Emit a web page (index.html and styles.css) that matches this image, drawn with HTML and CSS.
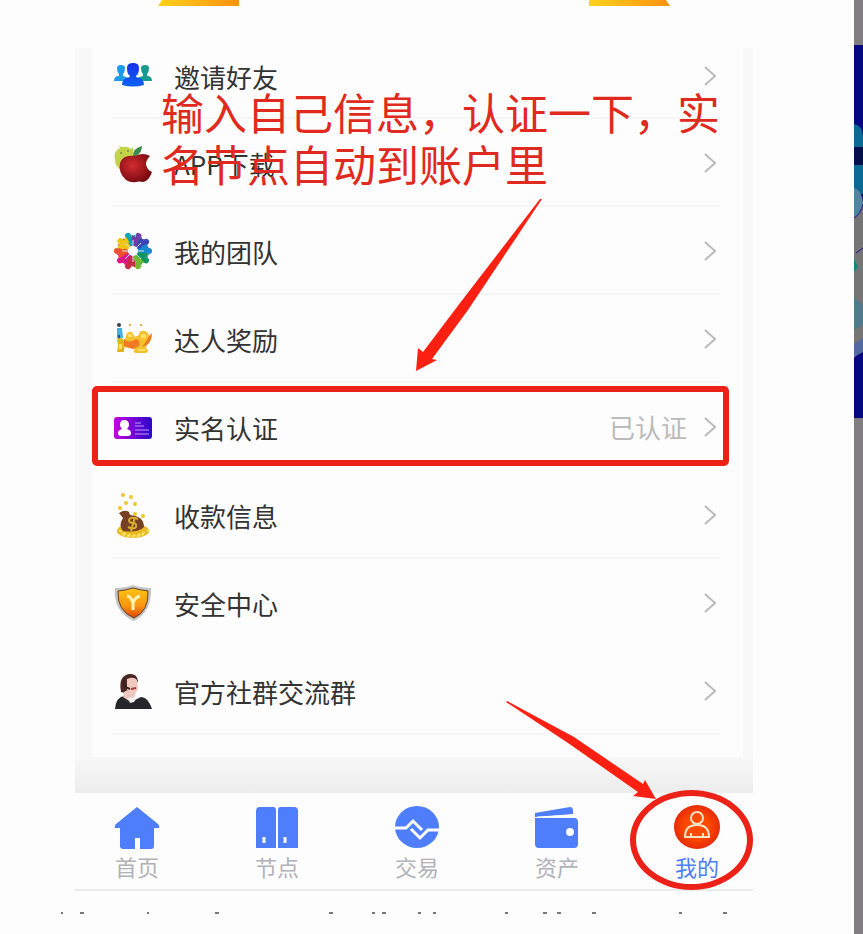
FILE: index.html
```html
<!DOCTYPE html>
<html lang="zh-CN">
<head>
    <meta charset="UTF-8">
    <meta name="viewport" content="width=device-width, initial-scale=1.0">
    <title>实名认证</title>
    <link rel="stylesheet" href="styles.css">
</head>
<body>
    <main class="sheet">
        <div class="banner">
            <span class="banner-tab left"></span>
            <span class="banner-tab right"></span>
        </div>

        <div class="phone">
            <div class="panel">
                <div class="card">
                    <a href="#" class="row first">
                        <svg class="icon" viewBox="0 0 40 40">
                            <defs>
                                <linearGradient id="mid" x1="0" y1="0" x2="0" y2="1">
                                    <stop offset="0" stop-color="#1730e8"/>
                                    <stop offset="1" stop-color="#0b63f5"/>
                                </linearGradient>
                            </defs>
                            <path fill="#1c9be8" d="M4 12q0-3 4-3t4 3q0 4-2 6v2q4 1 5 2v3H1q0-5 5-5v-2q-2-2-2-6z"/>
                            <path fill="#159a92" d="M28 12q0-3 4-3t4 3q0 4-2 6v2q5 0 5 5H25v-3q1-1 5-2v-2q-2-2-2-6z"/>
                            <path fill="url(#mid)" d="M14 12q0-5 6-5t6 5q0 6-3 8v1q8 1 8 8-11 3-22 0 0-7 8-8v-1q-3-2-3-8z"/>
                        </svg>
                        <span class="name">邀请好友</span>
                        <svg class="chevron" viewBox="0 0 14 22"><path d="M2 2l10 9-10 9"/></svg>
                    </a>
                    <a href="#" class="row">
                        <svg class="icon" viewBox="0 0 40 40">
                            <defs>
                                <radialGradient id="apple" cx="0.4" cy="0.4" r="0.65">
                                    <stop offset="0" stop-color="#d42b30"/>
                                    <stop offset="1" stop-color="#74090f"/>
                                </radialGradient>
                            </defs>
                            <path fill="#c3d24b" d="M2 17q-2-9 5-12l-1-2 3 1q6-1 9 2l2-2v4q3 5 0 11L8 27q-6-4-6-10z"/>
                            <circle cx="8" cy="10" r="1" fill="#7d9330"/>
                            <circle cx="15" cy="8" r="1" fill="#7d9330"/>
                            <path fill="#3e8b52" d="M20 13q0-8 9-10 0 7-6 10z"/>
                            <path fill="url(#apple)" d="M22 13q8-4 15 0-4 4-4 8 1 6 6 8-3 9-9 10-4-1-7 0-5 1-10-2-8-7-6-17 3-9 15-7z"/>
                        </svg>
                        <span class="name">APP下载</span>
                        <svg class="chevron" viewBox="0 0 14 22"><path d="M2 2l10 9-10 9"/></svg>
                    </a>
                    <a href="#" class="row">
                        <svg class="icon" viewBox="0 0 40 40">
                            <defs>
                                <g id="person">
                                    <circle cx="20" cy="4" r="3"/>
                                    <path d="M13 5l4 1h6l4-1-2 6-2 1-1 5h-4l-1-5-2-1z"/>
                                </g>
                            </defs>
                            <use href="#person" fill="#12a3b5" transform="rotate(-18 20 20)"/>
                            <use href="#person" fill="#6f3fa8" transform="rotate(20 20 20)"/>
                            <use href="#person" fill="#3948b5" transform="rotate(55 20 20)"/>
                            <use href="#person" fill="#1688d2" transform="rotate(90 20 20)"/>
                            <use href="#person" fill="#12955f" transform="rotate(126 20 20)"/>
                            <use href="#person" fill="#72b832" transform="rotate(162 20 20)"/>
                            <use href="#person" fill="#c62c48" transform="rotate(198 20 20)"/>
                            <use href="#person" fill="#df168b" transform="rotate(234 20 20)"/>
                            <use href="#person" fill="#ee5128" transform="rotate(270 20 20)"/>
                            <use href="#person" fill="#f1c711" transform="rotate(308 20 20)"/>
                            <path stroke="#d3e6f8" d="M20 9v22M9 20h22M12 12l16 16M28 12L12 28"/>
                            <circle cx="20" cy="20" r="5" fill="#fff"/>
                        </svg>
                        <span class="name">我的团队</span>
                        <svg class="chevron" viewBox="0 0 14 22"><path d="M2 2l10 9-10 9"/></svg>
                    </a>
                    <a href="#" class="row">
                        <svg class="icon" viewBox="0 0 40 40">
                            <circle cx="6" cy="6" r="2" fill="#35414c"/>
                            <path fill="#43afe4" d="M4 9h5l1 10H4z"/>
                            <path fill="#28567c" d="M5 16h2v5H5z"/>
                            <path fill="#e0b51d" d="M4 20q5-3 8 3l-1 10H4l1-6z"/>
                            <path fill="#f6c12e" d="M13 17q1-5 6-4l3 5 4-2q0-5 6-4 6 2 3 9l-2 8q4 3 0 5H22q-3-2 0-4l-12-2 2-8z"/>
                            <path fill="#f07b22" d="M11 20q5 5 12 0 5 1 3 7l-6 3-9-3zM34 21q1-4 5-7 0 8-5 12l-5 2z"/>
                            <path fill="#ffe067" d="M15 15h4v3h-4zM28 15h5v4h-5zM25 30h7v2h-7zM6 25h3v5H6z"/>
                            <path fill="#e7b23a" d="M16 5h2v2h-2zM27 5h2v2h-2z"/>
                        </svg>
                        <span class="name">达人奖励</span>
                        <svg class="chevron" viewBox="0 0 14 22"><path d="M2 2l10 9-10 9"/></svg>
                    </a>
                    <a href="#" class="row marked">
                        <svg class="icon" viewBox="0 0 40 40">
                            <defs>
                                <linearGradient id="idcard">
                                    <stop offset="0" stop-color="#c400e0"/>
                                    <stop offset="1" stop-color="#2a08c9"/>
                                </linearGradient>
                            </defs>
                            <rect x="1" y="10" width="38" height="22" rx="3" fill="url(#idcard)"/>
                            <path fill="#fff" d="M11 13q5 0 5 5 0 2-2 4 4 1 4 4 0 3-3 3H8q-3 0-3-3t4-4q-2-2-2-4 0-5 4-5z"/>
                            <path stroke="#b9a0f8" d="M22 16h6M22 19h9M22 23h14M22 27h14"/>
                        </svg>
                        <span class="name">实名认证</span>
                        <span class="status">已认证</span>
                        <svg class="chevron" viewBox="0 0 14 22"><path d="M2 2l10 9-10 9"/></svg>
                    </a>
                    <a href="#" class="row">
                        <svg class="icon tall" viewBox="0 0 40 48">
                            <g fill="#efc62e">
                                <circle cx="10" cy="4" r="2"/>
                                <circle cx="18" cy="6" r="2"/>
                                <circle cx="13" cy="12" r="2"/>
                                <circle cx="22" cy="13" r="2"/>
                                <circle cx="7" cy="17" r="2"/>
                                <circle cx="22" cy="23" r="2"/>
                                <circle cx="30" cy="25" r="2"/>
                            </g>
                            <ellipse cx="20" cy="40" rx="16" ry="7" fill="#e8b923"/>
                            <path stroke="#fae260" stroke-width="2" stroke-dasharray="3 2" fill="none" d="M6 39q14 11 29 0M9 43q11 5 22 0"/>
                            <path fill="#754023" d="M6 22q6-4 10-1l1 3q14 1 14 12-6 6-21 4-5-6 0-13z"/>
                            <path fill="none" stroke="#d9ae32" stroke-width="2" d="M25 28q-8-3-9 1 0 3 4 3t3 4q-2 3-8 0M22 26l-4 14"/>
                        </svg>
                        <span class="name">收款信息</span>
                        <svg class="chevron" viewBox="0 0 14 22"><path d="M2 2l10 9-10 9"/></svg>
                    </a>
                    <a href="#" class="row plain">
                        <svg class="icon" viewBox="0 0 40 40">
                            <defs>
                                <linearGradient id="shield" x1="0" y1="0" x2="0" y2="1">
                                    <stop offset="0" stop-color="#ffc414"/>
                                    <stop offset="0.6" stop-color="#f79510"/>
                                    <stop offset="1" stop-color="#e0420a"/>
                                </linearGradient>
                            </defs>
                            <path fill="#c3c3c3" d="M2 5q11 0 18-3 8 3 18 3 1 24-17 33Q0 29 2 5z"/>
                            <path fill="url(#shield)" stroke="#5f4328" d="M5 8q9-1 15-3 7 2 15 3 1 20-14 27Q4 28 5 8z"/>
                            <path fill="none" stroke="#fff3b0" stroke-width="3" d="M14 13q4 0 6 7 2-6 7-7M20 19v8"/>
                        </svg>
                        <span class="name">安全中心</span>
                        <svg class="chevron" viewBox="0 0 14 22"><path d="M2 2l10 9-10 9"/></svg>
                    </a>
                    <a href="#" class="row">
                        <svg class="icon" viewBox="0 0 40 40">
                            <path fill="#4b2625" d="M8 21Q5 5 16 3q8-1 9 7l-5 9-8 3z"/>
                            <path fill="#efc9be" d="M14 8q7-3 10 1l1 7q0 6-6 7l-5-4z"/>
                            <path fill="#26262a" d="M2 38q1-12 9-13l9 5 8-4q7 0 11 12z"/>
                            <path fill="#edc8c0" d="M11 21q5-4 7 1l5-1-2 6-5 3-6-4z"/>
                            <path fill="#f4f1f2" d="M15 27l9-1-3 5-4 1z"/>
                            <path stroke="#a83c42" stroke-width="2" d="M18 18l5-1"/>
                            <path fill="none" stroke="#37211f" stroke-width="2" d="M11 8q-2 8 6 10"/>
                        </svg>
                        <span class="name">官方社群交流群</span>
                        <svg class="chevron" viewBox="0 0 14 22"><path d="M2 2l10 9-10 9"/></svg>
                    </a>
                </div>
            </div>

            <nav class="tabbar">
                <a href="#" class="tab">
                    <svg viewBox="0 0 46 44"><path fill="#4e7efb" d="M23 1l21 17q2 2 1 4h-5v18q0 3-3 3H26V32h-5v11H9q-3 0-3-3V22H1q-1-2 1-4z"/></svg>
                    首页
                </a>
                <a href="#" class="tab">
                    <svg viewBox="0 0 46 44">
                        <path fill="#4e7efb" d="M2 42V5q0-4 4-4h13q3 0 3 3v38zM24 42V4q0-3 3-3h13q4 0 4 4v37z"/>
                        <path stroke="#fdfdfd" stroke-width="3" d="M10 31v6M31 31v6"/>
                    </svg>
                    节点
                </a>
                <a href="#" class="tab">
                    <svg viewBox="0 0 46 44">
                        <ellipse cx="23" cy="21" rx="22" ry="21" fill="#4e7efb"/>
                        <path fill="none" stroke="#fdfdfd" stroke-width="3" d="M0 22h12l7-7 9 9M45 24H34l-8 8-9-9"/>
                    </svg>
                    交易
                </a>
                <a href="#" class="tab">
                    <svg viewBox="0 0 46 44">
                        <path fill="#4e7efb" d="M1 11V7l35-6q3 0 3 4v3L6 11zM1 12h39q4 0 4 4v22q0 4-4 4H5q-4 0-4-4z"/>
                        <path stroke="#fdfdfd" d="M3 11l36-2"/>
                        <circle cx="36" cy="26" r="4" fill="#fdfdfd"/>
                    </svg>
                    资产
                </a>
                <a href="#" class="tab active">
                    <svg viewBox="0 0 46 44">
                        <defs>
                            <radialGradient id="me">
                                <stop offset="0.5" stop-color="#ff4a00"/>
                                <stop offset="1" stop-color="#e62c08"/>
                            </radialGradient>
                        </defs>
                        <ellipse cx="23" cy="21" rx="23" ry="22" fill="url(#me)"/>
                        <g fill="none" stroke="#ffe3c8" stroke-width="2">
                            <circle cx="23" cy="12" r="6"/>
                            <path d="M11 31q0-12 12-12t12 12zM17 31v-4M29 31v-4"/>
                        </g>
                    </svg>
                    我的
                    <span class="ring"></span>
                </a>
            </nav>
        </div>

        <svg class="specks" viewBox="0 0 678 2" preserveAspectRatio="xMinYMin slice">
            <path d="M-14 1h2M5 1h4M72 1h2M140 1h4M254 1h4M297 1h3M307 1h4M343 1h3M358 1h3M430 1h3M468 1h4M482 1h4M517 1h4M604 1h3M648 1h4"/>
        </svg>

        <p class="note">输入自己信息，认证一下，实名节点自动到账户里</p>
        <svg class="arrow to-row" viewBox="0 0 128 174">
            <path d="M127 1L53 112 17 161l5 1L1 173l2-23 5 4 37-49L125 1z"/>
        </svg>
        <svg class="arrow to-tab" viewBox="0 0 152 102">
            <path d="M2 1l67 36 69 47 2-4 11 19-23-3 5-4L63 43 1 2z"/>
        </svg>
    </main>

    <aside class="backdrop">
        <svg viewBox="0 0 9 373" preserveAspectRatio="none">
            <path fill="#07077f" d="M0 0h9v373H0z"/>
            <path fill="#0b6a93" d="M0 79q8 1 9 12v58H0z"/>
            <path fill="#03104a" d="M0 102h9v18H0z"/>
            <path fill="#757575" d="M0 143q9 3 9 18v143l-9 9z"/>
            <path fill="#5283a0" d="M0 143q7 2 9 16-2 10-9 14z"/>
            <path fill="none" stroke="#26118a" d="M0 173q7-4 9-14M2 208l7-5"/>
            <path fill="#11867c" d="M0 214l4 8-4 5z"/>
            <path fill="#4f7a8a" d="M0 252l9 8v20l-9 5z"/>
            <path fill="#5568a0" d="M0 299l9-6v14l-9 5z"/>
        </svg>
    </aside>
</body>
</html>
```

FILE: styles.css
```css
*,
*::after {
    margin: 0;
    padding: 0;
    box-sizing: border-box;
}

body {
    font-family: 'Noto Sans CJK SC', sans-serif;
    color: #333;
    background-color: #fdfdfd;
    display: flex;
    min-height: 100vh;
}

a {
    color: inherit;
    text-decoration: none;
}

svg {
    display: block;
    overflow: visible;
}

.sheet {
    flex: 1;
    position: relative;
    padding: 0 101px 0 75px;
}

.banner {
    display: flex;
    justify-content: space-between;
    height: 48px;
    padding: 0 83px;
}

.banner-tab {
    width: 81px;
    height: 6px;
    background: linear-gradient(90deg, #fdd21c, #fb9110);
}

.banner-tab.left {
    clip-path: polygon(4px 0, 100% 0, 100% 100%, 0 100%);
}

.banner-tab.right {
    clip-path: polygon(0 0, 77px 0, 100% 100%, 0 100%);
}

.panel {
    padding: 0 10px 36px 17px;
    background: linear-gradient(#f8f8f8 95%, #ececec);
}

.card {
    background-color: #fdfdfd;
    padding: 0 23px 22px 20px;
}

.row {
    position: relative;
    display: flex;
    align-items: center;
    height: 88px;
    padding: 2px 3px 0 0;
    border-bottom: 2px solid #f6f6f6;
}

.row.first {
    height: 71px;
    padding-bottom: 15px;
}

.row.plain,
.row.marked {
    border-color: transparent;
}

.icon {
    width: 40px;
    height: 40px;
    margin: 0 21px 0 1px;
    fill: none;
}

.icon.tall {
    height: 48px;
}

.name {
    flex: 1;
    padding-top: 2px;
    font-size: 26px;
    line-height: 40px;
}

.status {
    margin-right: 16px;
    font-size: 26px;
    line-height: 40px;
    color: #bbb;
}

.chevron {
    width: 14px;
    height: 22px;
    fill: none;
    stroke: #bbb;
    stroke-width: 2;
}

/* red frame around the highlighted entry */
.marked::after {
    content: "";
    position: absolute;
    top: 3px;
    left: -20px;
    right: -9px;
    height: 80px;
    border: 6px solid #ec2218;
    border-radius: 5px;
}

.tabbar {
    display: flex;
    justify-content: space-between;
    height: 98px;
    padding: 13px 33px 0 39px;
    border-bottom: 2px solid #ebebeb;
}

.tab {
    position: relative;
    width: 46px;
    font-size: 22px;
    line-height: 32px;
    text-align: center;
    color: #b0b2b8;
}

.tab svg {
    width: 46px;
    height: 44px;
}

.tab.active {
    color: #4e7efb;
}

.ring {
    position: absolute;
    top: -16px;
    left: -44px;
    width: 123px;
    height: 100px;
    border: 6px solid #ec2218;
    border-radius: 50%;
}

.specks {
    width: 100%;
    height: 2px;
    margin-top: 21px;
    fill: none;
    stroke: #777;
    stroke-width: 2;
}

.note {
    position: absolute;
    top: 85px;
    left: 161px;
    width: 564px;
    font-size: 43px;
    line-height: 52px;
    color: #e02a20;
}

.arrow {
    position: absolute;
    fill: #fb2012;
}

.to-row {
    top: 198px;
    left: 415px;
    width: 128px;
}

.to-tab {
    top: 700px;
    left: 505px;
    width: 152px;
}

.backdrop {
    width: 9px;
    padding-top: 45px;
    background-color: #807e80;
}

.backdrop svg {
    width: 100%;
    height: 373px;
}
```
